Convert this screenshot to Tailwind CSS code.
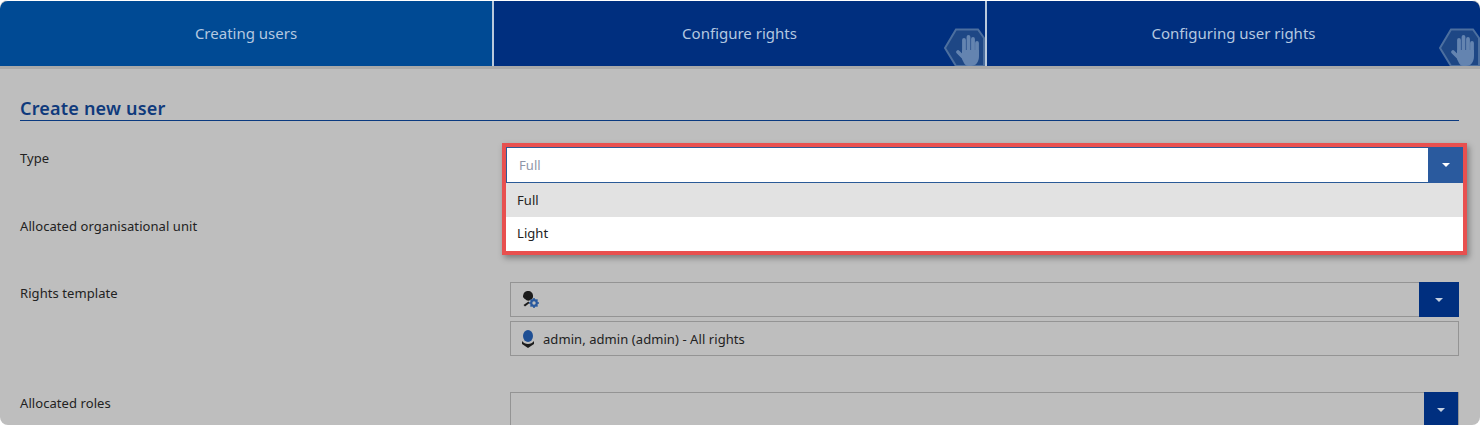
<!DOCTYPE html>
<html>
<head>
<meta charset="utf-8">
<script src="https://cdn.jsdelivr.net/npm/@tailwindcss/browser@4"></script>
</head>
<body class="bg-white overflow-hidden">
<div class="w-[1480px] h-[425px] overflow-hidden rounded-[8px] bg-[#bebebe] font-['Noto_Sans',sans-serif] text-[13px] text-[#222] tracking-[0.07px]">
  <div class="h-[1px] bg-white"></div>
  <div class="flex h-[65px] text-[15px] text-[#b4c8e0] tracking-[0px]">
    <div class="w-[492px] bg-[#004a94] rounded-tl-[8px] flex items-center justify-center">Creating users</div>
    <div class="w-[2px] bg-[#b9c9dc]"></div>
    <div class="w-[491px] bg-[#002f7f] relative flex items-center justify-center overflow-hidden">Configure rights
      <svg class="absolute right-0 bottom-0" width="42" height="38" viewBox="0 0 42 38"><path d="M13 1.500H35L41 10V38H13L2 20Z" fill="#1e4785" stroke="#4c6f9f" stroke-width="2"/><g stroke="#6484b0" stroke-width="3.800" stroke-linecap="round" fill="none"><path d="M21 24V12M25.500 24V9M30 24V11M34 24V15M15 24l6 6"/></g><path d="M19 22H36v6c0 6-3 10-8 10h-3c-3 0-4-3-6-7z" fill="#6484b0"/></svg>
    </div>
    <div class="w-[2px] bg-[#b9c9dc]"></div>
    <div class="flex-1 bg-[#002f7f] rounded-tr-[8px] relative flex items-center justify-center overflow-hidden">Configuring user rights
      <svg class="absolute right-0 bottom-0" width="42" height="38" viewBox="0 0 42 38"><path d="M13 1.500H35L41 10V38H13L2 20Z" fill="#1e4785" stroke="#4c6f9f" stroke-width="2"/><g stroke="#6484b0" stroke-width="3.800" stroke-linecap="round" fill="none"><path d="M21 24V12M25.500 24V9M30 24V11M34 24V15M15 24l6 6"/></g><path d="M19 22H36v6c0 6-3 10-8 10h-3c-3 0-4-3-6-7z" fill="#6484b0"/></svg>
    </div>
  </div>
  <div class="h-[3px] bg-[#a9a9a9]"></div>
  <div class="pl-[20px] pr-[21px]">
    <div class="mt-[28px] h-[24px] border-b border-[#0b3a80] text-[18px] leading-[22px] font-semibold text-[#0f3a7c] tracking-[0.2px]">Create new user</div>
    <div class="mt-[27px] flex">
      <div class="w-[490px] pt-[1px]">Type</div>
      <div class="flex-1 relative h-[35px]">
        <div class="absolute left-[-8px] right-[-8px] top-[-5px] h-[112px] border-[4px] border-[#e8504f] bg-white shadow-[2px_3px_6px_rgba(0,0,0,0.35)] z-10">
          <div class="flex h-[36px] border border-[#2a5a97] bg-white">
            <div class="flex-1 pl-[12px] pt-[2px] flex items-center text-[#8f96a8]">Full</div>
            <div class="w-[35px] -my-px -mr-px bg-[#2a5a9e] flex items-center justify-center"><span class="w-0 h-0 border-x-[4px] border-x-transparent border-t-[4px] border-t-white"></span></div>
          </div>
          <div class="h-[34px] bg-[#e2e2e2] pl-[11px] pt-[2px] flex items-center">Full</div>
          <div class="h-[33px] bg-white pl-[11px] flex items-center">Light</div>
        </div>
      </div>
    </div>
    <div class="mt-[32px] flex">
      <div class="w-[490px] pt-[2px]">Allocated organisational unit</div>
      <div class="flex-1 h-[35px]"></div>
    </div>
    <div class="mt-[32px] flex">
      <div class="w-[490px] pt-[2px]">Rights template</div>
      <div class="flex-1">
        <div class="flex h-[35px] border border-[#949494]">
          <div class="flex-1 pl-[11px] flex items-center">
            <svg width="18" height="18" viewBox="0 0 18 18"><path d="M1 6C1 2 3 0 6 0s5 2 5 5c0 1 0 2-1 3-1 1-3 2-5 1.500L3 8z" fill="#1c1c1c"/><path d="M1 5.500l9 1-1 2-6-.5z" fill="#1c1c1c"/><path d="M1.500 14l5-3.500 1 1.500-4.500 3.500z" fill="#1c1c1c"/><circle cx="12" cy="12" r="2.800" fill="none" stroke="#2a5a9e" stroke-width="2.200"/><path d="M12 7v2M12 15v2M7 12h2M15 12h2M8.500 8.500l1.200 1.200M14.300 14.300l1.200 1.200M8.500 15.500l1.200-1.200M14.300 9.700l1.200-1.200" stroke="#2a5a9e" stroke-width="1.600"/></svg>
          </div>
          <div class="w-[40px] -my-px -mr-px bg-[#002f7f] flex items-center justify-center"><span class="w-0 h-0 border-x-[4px] border-x-transparent border-t-[4px] border-t-[#c4cfe0]"></span></div>
        </div>
        <div class="mt-[4px] flex items-center h-[35px] border border-[#949494] pl-[10px] gap-[8px]">
          <svg width="14" height="18" viewBox="0 0 14 18"><ellipse cx="7" cy="6" rx="5" ry="6" fill="#1f4f94"/><path d="M1 11c1.500 2 3.500 3 6 3s4.500-1 6-3v3l-6 4-6-4z" fill="#1c1c1c"/></svg>
          <span class="pt-[2px]">admin, admin (admin) - All rights</span>
        </div>
      </div>
    </div>
    <div class="mt-[36px] flex">
      <div class="w-[490px] pt-[2px]">Allocated roles</div>
      <div class="flex-1 flex h-[35px] border border-[#949494]">
        <div class="flex-1"></div>
        <div class="w-[34px] -my-px bg-[#002f7f] flex items-center justify-center"><span class="w-0 h-0 border-x-[4px] border-x-transparent border-t-[4px] border-t-[#c4cfe0]"></span></div>
      </div>
    </div>
  </div>
</div>
</body>
</html>
